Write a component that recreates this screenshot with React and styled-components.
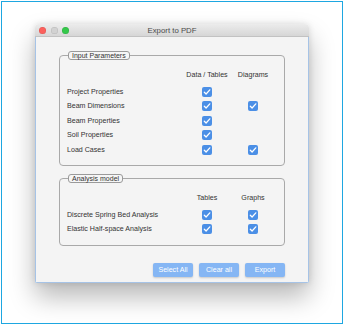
import React from 'react';
import styled, { createGlobalStyle } from 'styled-components';

const GlobalStyle = createGlobalStyle`
  html, body {
    margin: 0;
    padding: 0;
    background: #ffffff;
  }
  body {
    font-family: "Liberation Sans", Arial, sans-serif;
  }
`;

const Frame = styled.div`
  box-sizing: border-box;
  width: 342px;
  height: 323px;
  margin: 1px;
  border: 1px solid #1ea7e1;
  background: #ffffff;
  padding: 22px 0 0 33px;
`;

const Window = styled.div`
  width: 274px;
  box-shadow: 0 14px 26px rgba(0, 0, 0, 0.28), 0 0 6px rgba(0, 0, 0, 0.12);
  border-radius: 4px 4px 2px 2px;
  overflow: hidden;
`;

const TitleBar = styled.div`
  position: relative;
  height: 13px;
  display: flex;
  align-items: center;
  justify-content: center;
  background: linear-gradient(#ececec, #d6d6d6);
  border-bottom: 1px solid #c2c2c2;
  box-sizing: border-box;
`;

const Lights = styled.div`
  position: absolute;
  left: 4px;
  top: 2.5px;
  display: flex;
  gap: 4.5px;
`;

const Light = styled.span`
  width: 7px;
  height: 7px;
  border-radius: 50%;
  background: ${({ $color }) => $color};
  box-shadow: inset 0 0 0 0.5px rgba(0, 0, 0, 0.12);
`;

const Title = styled.span`
  font-size: 7.8px;
  color: #4a4a4a;
`;

const Body = styled.div`
  background: #f4f4f4;
  border: 1px solid #a6c3e6;
  border-top: none;
  padding: 14px 23px 5px;
  display: flex;
  flex-direction: column;
`;

const Group = styled.fieldset`
  margin: 0 0 ${({ $mb }) => $mb}px;
  padding: 10px 8px 8px 7px;
  border: 1px solid #a9a9a9;
  border-radius: 4px;
  min-width: 0;
`;

const Legend = styled.legend`
  margin-left: 1px;
  padding: 0 3px;
  height: 9px;
  line-height: 8px;
  box-sizing: border-box;
  border: 1px solid #9a9a9a;
  border-radius: 3px;
  background: #f6f6f6;
  font-size: 7px;
  color: #333;
`;

const Grid = styled.div`
  display: grid;
  grid-template-columns: 1fr 46px 46px;
  grid-auto-rows: 14.5px;
  align-items: center;
  font-size: 7.1px;
  color: #333;
`;

const Head = styled.div`
  height: 10px;
  line-height: 10px;
  margin-bottom: 4px;
  text-align: center;
  grid-row: 1;
  align-self: start;
  white-space: nowrap;
`;

const Label = styled.div`
  white-space: nowrap;
`;

const Cell = styled.div`
  display: flex;
  justify-content: center;
`;

const Box = styled.span`
  width: 10px;
  height: 10px;
  border-radius: 2px;
  background: #4b8fe6;
  display: flex;
  align-items: center;
  justify-content: center;
`;

const Buttons = styled.div`
  display: flex;
  justify-content: flex-end;
  gap: 6px;
`;

const Button = styled.button`
  width: 40px;
  height: 14px;
  padding: 0;
  border: none;
  border-radius: 2px;
  background: #85b6f4;
  color: #ffffff;
  font-family: "Liberation Sans", Arial, sans-serif;
  font-size: 7.1px;
  box-shadow: 0 1px 2px rgba(0, 0, 0, 0.18);
`;

const Check = () => (
  <Box>
    <svg width="8" height="8" viewBox="0 0 8 8">
      <path d="M1.3 4.2 L3.1 6 L6.8 1.8" fill="none" stroke="#fff" strokeWidth="1.25" strokeLinecap="round" strokeLinejoin="round" />
    </svg>
  </Box>
);

const Section = ({ title, cols, rows, mb }) => (
  <Group $mb={mb}>
    <Legend>{title}</Legend>
    <Grid>
      <Head />
      <Head>{cols[0]}</Head>
      <Head>{cols[1]}</Head>
      {rows.map(([name, a, b]) => (
        <React.Fragment key={name}>
          <Label>{name}</Label>
          <Cell>{a && <Check />}</Cell>
          <Cell>{b && <Check />}</Cell>
        </React.Fragment>
      ))}
    </Grid>
  </Group>
);

export default function App() {
  return (
    <>
      <GlobalStyle />
      <Frame>
        <Window>
          <TitleBar>
            <Lights>
              <Light $color="#fc605c" />
              <Light $color="#d2d2d2" />
              <Light $color="#34c84a" />
            </Lights>
            <Title>Export to PDF</Title>
          </TitleBar>
          <Body>
            <Section
              title="Input Parameters"
              cols={['Data / Tables', 'Diagrams']}
              mb={8}
              rows={[
                ['Project Properties', true, false],
                ['Beam Dimensions', true, true],
                ['Beam Properties', true, false],
                ['Soil Properties', true, false],
                ['Load Cases', true, true],
              ]}
            />
            <Section
              title="Analysis model"
              cols={['Tables', 'Graphs']}
              mb={17}
              rows={[
                ['Discrete Spring Bed Analysis', true, true],
                ['Elastic Half-space Analysis', true, true],
              ]}
            />
            <Buttons>
              <Button>Select All</Button>
              <Button>Clear all</Button>
              <Button>Export</Button>
            </Buttons>
          </Body>
        </Window>
      </Frame>
    </>
  );
}
